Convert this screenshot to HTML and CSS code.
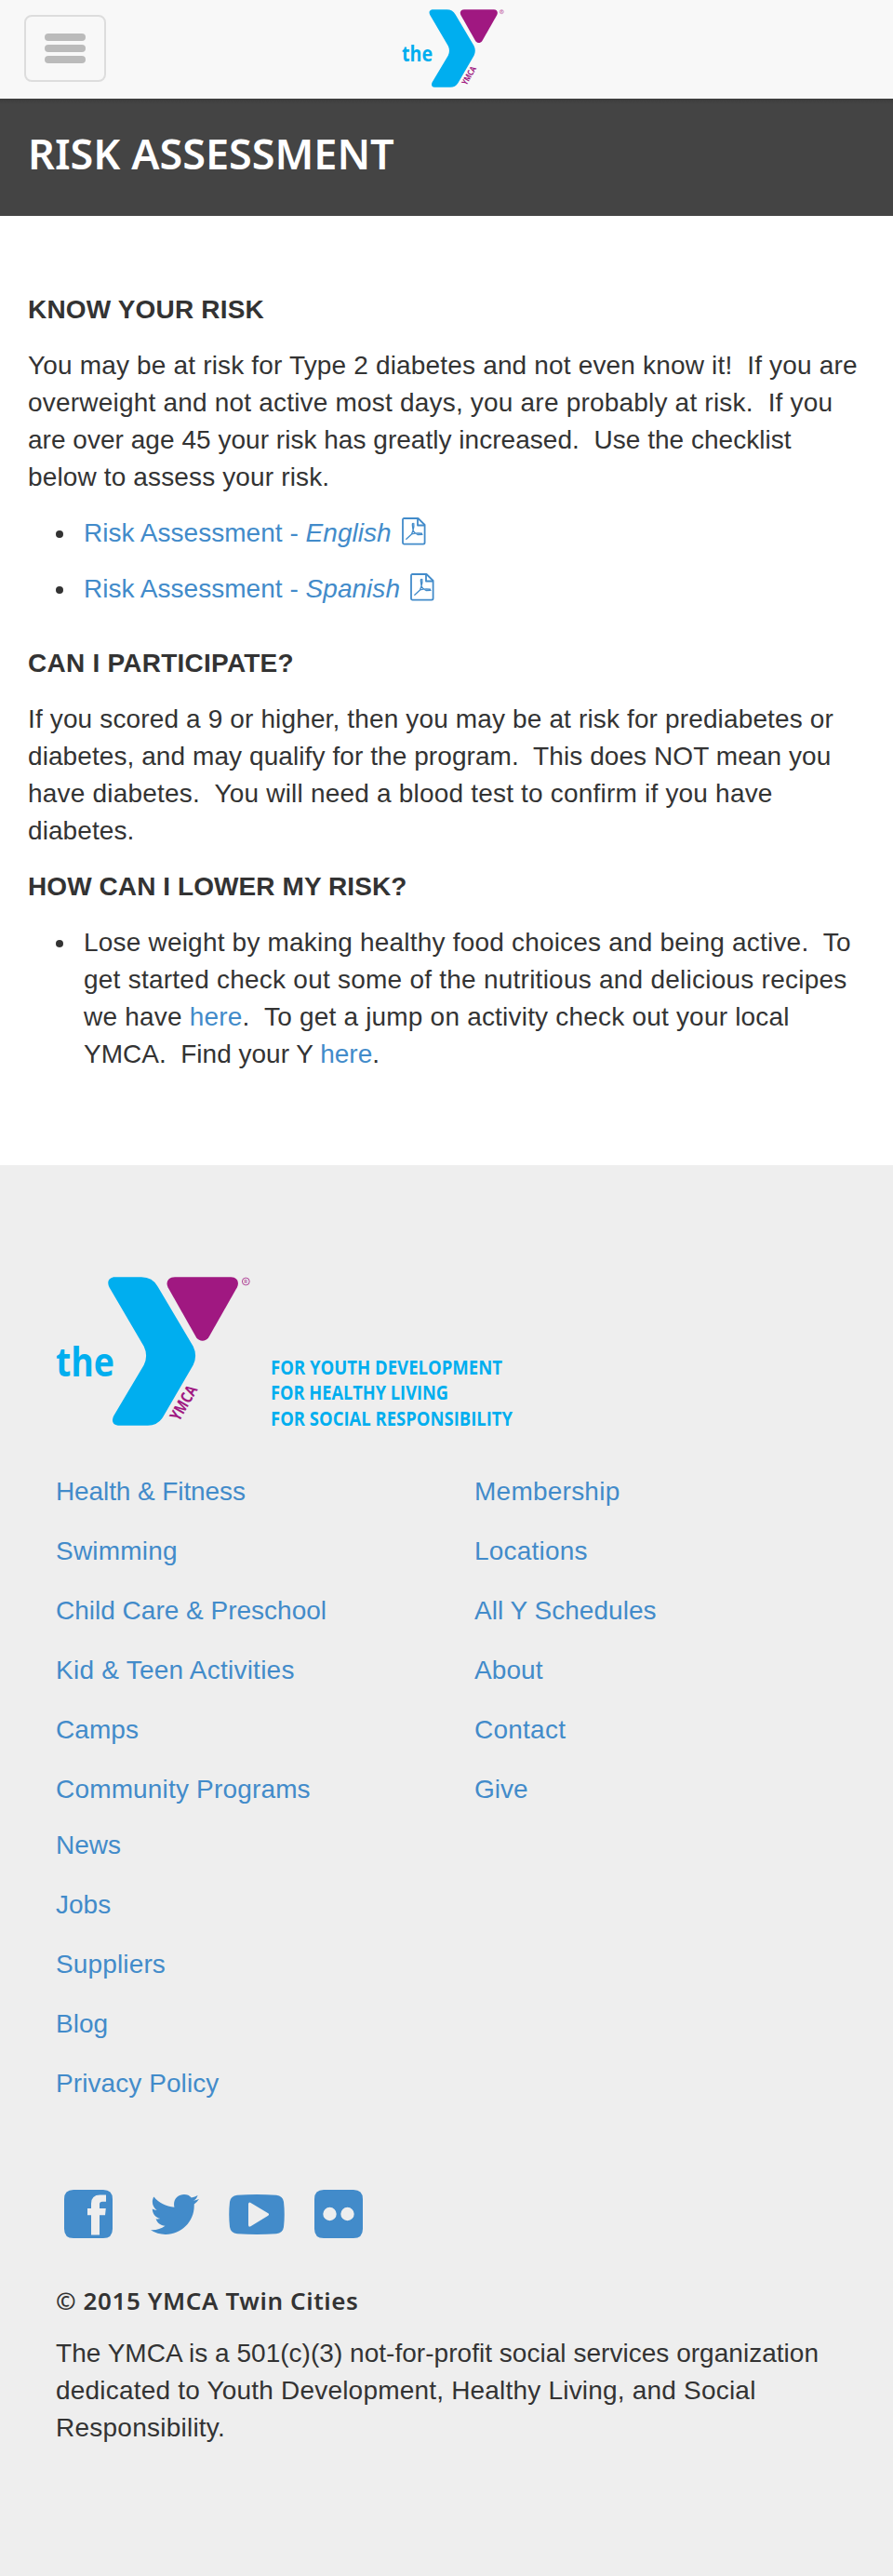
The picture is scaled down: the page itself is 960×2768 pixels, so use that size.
FILE: index.html
```html
<!DOCTYPE html>
<html lang="en">
<head>
<meta charset="utf-8">
<title>Risk Assessment</title>
<link rel="stylesheet" href="styles.css">
</head>
<body>
<header class="navbar">
  <button class="toggle" aria-label="Menu"><span class="bar"></span><span class="bar"></span><span class="bar"></span></button>
  <a class="brand" href="#">
    <svg class="brand-mark" viewBox="0 0 210 160">
      <path fill="#00aeef" d="M62 .3H92Q104 .3 109.600 10.500L147.700 74.700Q152.500 84.700 147.700 94.700L115 151Q109.500 159.700 99 159.700H66.800Q58.500 158.500 62 149.700L94.700 94.700Q99.500 84.700 94.700 74.700L57.500 11.300Q53.500 2.500 62 .3Z"/>
      <path fill="#a01881" d="M128 .3H188.300C195 .3 197.500 6 194.900 11.300L164.200 65.300C161 69.800 154.300 69.800 151.100 65.300L120.500 11.300C118 6 120.500 .3 128 .3Z"/>
      <circle cx="204.300" cy="5" r="3.900" fill="none" stroke="#a01881" stroke-width=".8"/>
      <text class="mark-reg" x="202.200" y="7.200">R</text>
      <text class="mark-the" x="0" y="107.300" textLength="63" lengthAdjust="spacingAndGlyphs">the</text>
      <text class="mark-ymca" transform="translate(132.500 156) rotate(-60)" textLength="40.500" lengthAdjust="spacingAndGlyphs">YMCA</text>
    </svg>
  </a>
</header>

<div class="title-bar"><h1 class="title">RISK ASSESSMENT</h1></div>

<main class="content">
  <h2 class="heading track-4">KNOW YOUR RISK</h2>
  <p class="text">
    <span class="line track-4">You may be at risk for Type 2 diabetes and not even know it!&nbsp; If you are</span>
    <span class="line track-5">overweight and not active most days, you are probably at risk.&nbsp; If you</span>
    <span class="line track-1">are over age 45 your risk has greatly increased.&nbsp; Use the checklist</span>
    <span class="line track-3">below to assess your risk.</span>
  </p>
  <ul class="list list-docs">
    <li><a class="link track-1" href="#">Risk Assessment - <em>English</em><svg class="pdf" viewBox="0 0 26 30"><path d="M2.500 1H17.500L24.600 8V27Q24.600 28.600 23 28.600H2.500Q1 28.600 1 27V2.500Q1 1 2.500 1Z"/><path d="M17 1V8.500H24.600"/><path class="pdf-swirl" d="M11.500 6.500C10.800 8 12 11 12 14L10.500 18L4.800 23.200M12 14C13 16 15 17.500 17 18.500L22 18.300M10.500 18C13 17.200 17 16.600 21.500 17.200M12.800 6.500C13.200 9 13 11 12 14"/></svg></a></li>
    <li><a class="link track-1" href="#">Risk Assessment - <em>Spanish</em><svg class="pdf" viewBox="0 0 26 30"><path d="M2.500 1H17.500L24.600 8V27Q24.600 28.600 23 28.600H2.500Q1 28.600 1 27V2.500Q1 1 2.500 1Z"/><path d="M17 1V8.500H24.600"/><path class="pdf-swirl" d="M11.500 6.500C10.800 8 12 11 12 14L10.500 18L4.800 23.200M12 14C13 16 15 17.500 17 18.500L22 18.300M10.500 18C13 17.200 17 16.600 21.500 17.200M12.800 6.500C13.200 9 13 11 12 14"/></svg></a></li>
  </ul>
  <h2 class="heading heading-can track-6">CAN I PARTICIPATE?</h2>
  <p class="text">
    <span class="line track-3">If you scored a 9 or higher, then you may be at risk for prediabetes or</span>
    <span class="line track-2">diabetes, and may qualify for the program.&nbsp; This does NOT mean you</span>
    <span class="line track-5">have diabetes.&nbsp; You will need a blood test to confirm if you have</span>
    <span class="line track-2">diabetes.</span>
  </p>
  <h2 class="heading heading-how track-2">HOW CAN I LOWER MY RISK?</h2>
  <ul class="list">
    <li><span class="track-5">Lose weight by making healthy food choices and being active.&nbsp; To</span>
      <span class="line track-6">get started check out some of the nutritious and delicious recipes</span>
      <span class="line track-5">we have <a class="link" href="#">here</a>.&nbsp; To get a jump on activity check out your local</span>
      <span class="line">YMCA.&nbsp; Find your Y <a class="link" href="#">here</a>.</span>
    </li>
  </ul>
</main>

<footer class="footer">
  <svg class="footer-logo" viewBox="0 0 500 160">
    <path fill="#00aeef" d="M62 .3H92Q104 .3 109.600 10.500L147.700 74.700Q152.500 84.700 147.700 94.700L115 151Q109.500 159.700 99 159.700H66.800Q58.500 158.500 62 149.700L94.700 94.700Q99.500 84.700 94.700 74.700L57.500 11.300Q53.500 2.500 62 .3Z"/>
    <path fill="#a01881" d="M128 .3H188.300C195 .3 197.500 6 194.900 11.300L164.200 65.300C161 69.800 154.300 69.800 151.100 65.300L120.500 11.300C118 6 120.500 .3 128 .3Z"/>
    <circle cx="204.300" cy="5" r="3.900" fill="none" stroke="#a01881" stroke-width=".8"/>
    <text class="mark-reg" x="202.200" y="7.200">R</text>
    <text class="mark-the" x="0" y="107.300" textLength="63" lengthAdjust="spacingAndGlyphs">the</text>
    <text class="mark-ymca" transform="translate(132.500 156) rotate(-60)" textLength="40.500" lengthAdjust="spacingAndGlyphs">YMCA</text>
    <g class="tagline">
      <text x="231" y="105" textLength="249" lengthAdjust="spacingAndGlyphs">FOR YOUTH DEVELOPMENT</text>
      <text x="231" y="132.300" textLength="191" lengthAdjust="spacingAndGlyphs">FOR HEALTHY LIVING</text>
      <text x="231" y="159.600" textLength="260" lengthAdjust="spacingAndGlyphs">FOR SOCIAL RESPONSIBILITY</text>
    </g>
  </svg>
  <div class="link-columns">
    <ul class="link-list">
      <li><a class="link track-tight" href="#">Health &amp; Fitness</a></li>
      <li><a class="link track-5" href="#">Swimming</a></li>
      <li><a class="link" href="#">Child Care &amp; Preschool</a></li>
      <li><a class="link track-6" href="#">Kid &amp; Teen Activities</a></li>
      <li><a class="link track-2" href="#">Camps</a></li>
      <li><a class="link track-4" href="#">Community Programs</a></li>
    </ul>
    <ul class="link-list">
      <li><a class="link track-6" href="#">Membership</a></li>
      <li><a class="link track-5" href="#">Locations</a></li>
      <li><a class="link track-1" href="#">All Y Schedules</a></li>
      <li><a class="link track-2" href="#">About</a></li>
      <li><a class="link track-6" href="#">Contact</a></li>
      <li><a class="link" href="#">Give</a></li>
    </ul>
    <ul class="link-list">
      <li><a class="link" href="#">News</a></li>
      <li><a class="link" href="#">Jobs</a></li>
      <li><a class="link track-3" href="#">Suppliers</a></li>
      <li><a class="link" href="#">Blog</a></li>
      <li><a class="link track-2" href="#">Privacy Policy</a></li>
    </ul>
  </div>
  <div class="social">
    <svg class="icon-facebook" viewBox="0 0 52 52"><path fill-rule="evenodd" d="M10 0H42Q52 0 52 10V42Q52 52 42 52H10Q0 52 0 42V10Q0 0 10 0ZM29 48.500H38V27.300H44L44.800 20H38V15.500Q38 12.700 41 12.700H45V5.500H38.500Q29 5.500 29 15V20H25V27.300H29Z"/></svg>
    <svg class="icon-twitter" viewBox="0 0 52 43"><path d="M52 5.100A21 21 0 0 1 46.700 10.600C47.500 29 33 43 16.400 43A29.800 29.800 0 0 1 0 38.300C6 38.700 11 37 15.500 33.800C10.500 33.500 7 30.500 5.600 26.300C7.500 26.600 8.700 26.500 10.300 26.100C5 24.700 1.800 20.500 1.800 15.500C3.300 16.300 4.800 16.800 6.600 16.900C1.800 13.200 .5 7.500 3.400 2.600C9 9.300 16.300 13.100 25.400 13.700C23.500 5 29.500 0 36 0C39.200 0 41.700 1.200 43.800 3.400C46.300 2.900 48.500 2.100 50.600 .9C49.800 3.400 48.200 5.500 45.900 6.700C48 6.500 50 6 52 5.100Z"/></svg>
    <svg class="icon-youtube" viewBox="0 0 60 43"><path fill-rule="evenodd" d="M9 .8Q30-.7 51 .8Q58 1.500 59 8Q60.500 21.500 59 35Q58 41.500 51 42.300Q30 43.700 9 42.300Q2 41.500 1 35Q-.5 21.500 1 8Q2 1.500 9 .8ZM21 10.300V33Q21.300 35.500 23.500 34.200L42.300 22.700Q43.800 21.500 42.300 20.300L23.500 8.900Q21.300 7.700 21 10.300Z"/></svg>
    <svg class="icon-flickr" viewBox="0 0 52 52"><path fill-rule="evenodd" d="M10 0H42Q52 0 52 10V42Q52 52 42 52H10Q0 52 0 42V10Q0 0 10 0ZM9.300 26A7.200 7.200 0 1 0 23.700 26A7.200 7.200 0 1 0 9.300 26ZM28.300 26A7.200 7.200 0 1 0 42.700 26A7.200 7.200 0 1 0 28.300 26Z"/></svg>
  </div>
  <h3 class="copyright">© 2015 YMCA Twin Cities</h3>
  <p class="text">
    <span class="line track-1">The YMCA is a 501(c)(3) not-for-profit social services organization</span>
    <span class="line track-5">dedicated to Youth Development, Healthy Living, and Social</span>
    <span class="line track-6">Responsibility.</span>
  </p>
</footer>
</body>
</html>
```
FILE: styles.css
```css
* { box-sizing: border-box; }
body {
  margin: 0;
  background: #fff;
  color: #333;
  font: 28px/40px "Liberation Sans", Arial, sans-serif;
  white-space: nowrap;
}
.link { color: #428bca; text-decoration: none; }
.line { display: block; }

/* Letter-spacing steps */
.track-tight { letter-spacing: -.1px; }
.track-1 { letter-spacing: .03px; }
.track-2 { letter-spacing: .08px; }
.track-3 { letter-spacing: .14px; }
.track-4 { letter-spacing: .17px; }
.track-5 { letter-spacing: .2px; }
.track-6 { letter-spacing: .24px; }

.navbar {
  display: grid;
  grid-template-columns: 1fr auto 1fr;
  height: 106px;
  padding: 10px 26px 0;
  background: #f8f8f8;
}
.toggle {
  display: flex;
  flex-direction: column;
  align-items: center;
  justify-content: center;
  gap: 4px;
  width: 88px;
  height: 72px;
  margin-top: 6px;
  padding: 0;
  border: 2px solid #ddd;
  border-radius: 8px;
  background: transparent;
}
.bar { width: 44px; height: 8px; border-radius: 4px; background: #bbb; }
.brand { display: block; height: 84px; margin-left: 14px; }
.brand-mark { display: block; width: 110.250px; height: 84px; overflow: visible; }
.mark-the { font: 700 43px "Open Sans", sans-serif; fill: #00aeef; }
.mark-ymca { font: 700 17.500px "Open Sans", sans-serif; fill: #a01881; }
.mark-reg { font: 6px "Open Sans", sans-serif; fill: #a01881; }

.title-bar {
  height: 126px;
  padding: 30px 30px 0;
  background: linear-gradient(#3c3c3c, #444 6px);
}
.title {
  margin: 0;
  color: #fff;
  font: 600 45px/58px "Noto Sans", sans-serif;
}

.content { padding: 81px 30px 99px; }
.heading { margin: 0 0 20px; font-size: 28px; line-height: 40px; font-weight: 700; }
.text { margin: 0; }
.heading-can { margin-top: 40px; }
.heading-how { margin-top: 20px; }
.list { margin: 0; padding-left: 60px; list-style: none; }
.list li::before {
  content: "";
  display: inline-block;
  width: 8px;
  height: 8px;
  margin: 0 22px 0 -30px;
  border-radius: 50%;
  background: #333;
  vertical-align: 4px;
}
.list-docs { display: flex; flex-direction: column; gap: 20px; margin-top: 20px; }
.pdf {
  width: 26px;
  height: 30px;
  margin: 0 0 -4px 11px;
  fill: none;
  stroke: #428bca;
  stroke-width: 1.800;
  stroke-linejoin: round;
  vertical-align: baseline;
}
.pdf-swirl { stroke-width: 1.300; stroke-linecap: round; }

.footer { height: 1516px; padding: 120px 60px 0; background: #eee; }
.footer-logo { display: block; width: 500px; height: 160px; overflow: visible; }
.tagline { font: 700 20.500px "Open Sans", sans-serif; fill: #00aeef; }
.link-columns { display: grid; grid-template-columns: 450px 1fr; row-gap: 20px; margin-top: 51px; }
.link-list { display: flex; flex-direction: column; gap: 24px; margin: 0; padding: 0; list-style: none; }
.social { display: flex; align-items: center; height: 52px; margin: 94px 0 0 9px; fill: #428bca; }
.icon-facebook, .icon-flickr { width: 52px; height: 52px; }
.icon-twitter { width: 52px; height: 43px; margin: 0 32px 0 41px; }
.icon-youtube { width: 60px; height: 43px; margin-right: 32px; }
.copyright { margin: 47px 0 17px; font: 600 26px/40px "Noto Sans", sans-serif; letter-spacing: .6px; }
```
